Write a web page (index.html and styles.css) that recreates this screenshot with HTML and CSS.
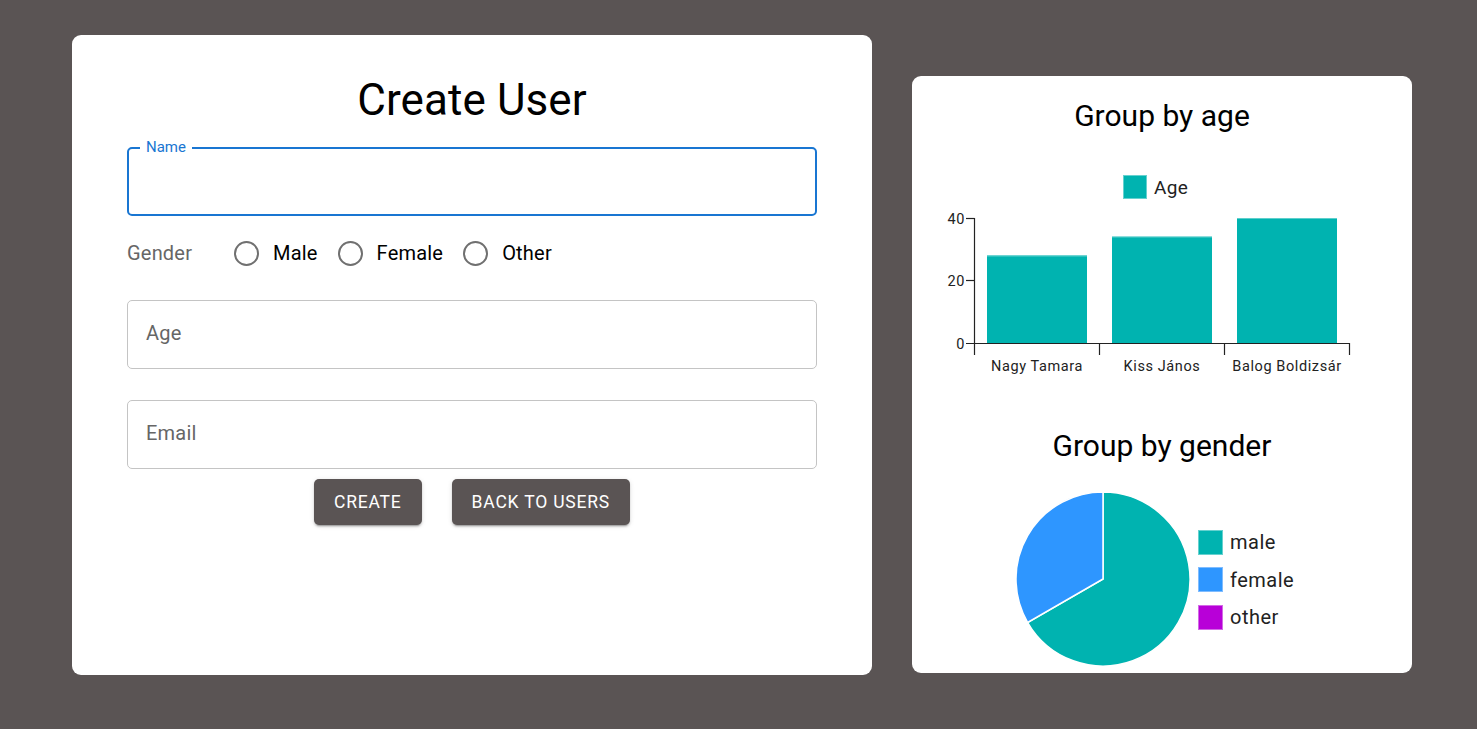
FILE: index.html
```html
<!DOCTYPE html>
<html lang="en">
<head>
<meta charset="utf-8">
<title>Create User</title>
<link rel="stylesheet" href="styles.css">
</head>
<body>
<div class="page">
  <section class="card form-card">
    <h1 class="title">Create User</h1>
    <div class="field field-focused">
      <span class="field-label">Name</span>
    </div>
    <div class="gender-row">
      <span class="gender-label">Gender</span>
      <div class="radio-group">
        <label class="radio-option"><span class="radio-circle"></span><span class="radio-text">Male</span></label>
        <label class="radio-option"><span class="radio-circle"></span><span class="radio-text">Female</span></label>
        <label class="radio-option"><span class="radio-circle"></span><span class="radio-text">Other</span></label>
      </div>
    </div>
    <div class="field field-age">
      <span class="field-placeholder">Age</span>
    </div>
    <div class="field field-email">
      <span class="field-placeholder">Email</span>
    </div>
    <div class="actions">
      <button class="btn">CREATE</button>
      <button class="btn">BACK TO USERS</button>
    </div>
  </section>

  <section class="card stats-card">
    <h2 class="chart-title">Group by age</h2>
    <svg class="bar-chart" width="500" height="220" viewBox="0 0 500 220">
      <rect x="211.5" y="10.5" width="23" height="23" fill="#00b3b0" stroke="#66d1cf" stroke-width="1"/>
      <text class="legend-text" x="242" y="29">Age</text>
      <g class="bars" fill="#00b3b0">
        <rect x="75" y="90.5" width="100" height="87.5"/>
        <rect x="200" y="71.75" width="100" height="106.25"/>
        <rect x="325" y="53" width="100" height="125"/>
      </g>
      <g stroke="#5ccfcc" stroke-width="1">
        <line x1="75" y1="91" x2="175" y2="91"/>
        <line x1="200" y1="72" x2="300" y2="72"/>
        <line x1="325" y1="53.5" x2="425" y2="53.5"/>
      </g>
      <g stroke="#222" stroke-width="1.2" fill="none">
        <line x1="62.5" y1="53" x2="62.5" y2="190"/>
        <line x1="54" y1="53.5" x2="62.5" y2="53.5"/>
        <line x1="54" y1="115.5" x2="62.5" y2="115.5"/>
        <line x1="54" y1="178.5" x2="437.5" y2="178.5"/>
        <line x1="187.5" y1="178" x2="187.5" y2="190"/>
        <line x1="312.5" y1="178" x2="312.5" y2="190"/>
        <line x1="437.5" y1="178" x2="437.5" y2="190"/>
      </g>
      <g class="axis-text" text-anchor="end">
        <text x="53" y="58.5">40</text>
        <text x="53" y="120.5">20</text>
        <text x="53" y="183.5">0</text>
      </g>
      <g class="axis-text" text-anchor="middle">
        <text x="125" y="206">Nagy Tamara</text>
        <text x="250" y="206">Kiss János</text>
        <text x="375" y="206">Balog Boldizsár</text>
      </g>
    </svg>
    <h2 class="chart-title chart-title-gender">Group by gender</h2>
    <svg class="pie-chart" width="500" height="185" viewBox="0 0 500 185">
      <path d="M191 91 L191 4 A87 87 0 1 1 115.66 134.5 Z" fill="#00b3b0" stroke="#ffffff" stroke-width="1.5"/>
      <path d="M191 91 L115.66 134.5 A87 87 0 0 1 191 4 Z" fill="#2e96ff" stroke="#ffffff" stroke-width="1.5"/>
      <rect x="286.5" y="42.5" width="24" height="24" fill="#00b3b0" stroke="#66d1cf"/>
      <rect x="286.5" y="79.5" width="24" height="24" fill="#2e96ff" stroke="#7fbcff"/>
      <rect x="286.5" y="117.5" width="24" height="24" fill="#b800d8" stroke="#d36ae6"/>
      <text class="legend-text pie-legend" x="318" y="61">male</text>
      <text class="legend-text pie-legend" x="318" y="99">female</text>
      <text class="legend-text pie-legend" x="318" y="136">other</text>
    </svg>
  </section>
</div>
</body>
</html>
```

FILE: styles.css
```css
* {
  box-sizing: border-box;
}

html, body {
  margin: 0;
  padding: 0;
}

body {
  background: #5a5454;
  font-family: Roboto, "Noto Sans", "Liberation Sans", sans-serif;
  width: 1477px;
  height: 729px;
  overflow: hidden;
}

.page {
  display: flex;
  align-items: flex-start;
  gap: 40px;
  padding: 35px 0 0 72px;
}

.card {
  background: #ffffff;
  border-radius: 9px;
}

.form-card {
  width: 800px;
  height: 640px;
  padding: 0 55px;
  display: flex;
  flex-direction: column;
}

.title {
  margin: 39px 0 0;
  font-size: 44px;
  line-height: 52px;
  font-weight: 400;
  text-align: center;
  color: #000;
  letter-spacing: 0.1px;
}

.field {
  position: relative;
  height: 69px;
  border: 1px solid #c4c4c4;
  border-radius: 5px;
  display: flex;
  align-items: center;
  padding-left: 18px;
  padding-bottom: 3px;
}

.field-focused {
  margin-top: 21px;
  border: 2px solid #1976d2;
}

.field-label {
  position: absolute;
  left: 11px;
  top: -11px;
  padding: 0 6px;
  background: #fff;
  color: #1976d2;
  font-size: 15px;
  line-height: 18px;
}

.field-placeholder {
  font-size: 20px;
  color: #666666;
  letter-spacing: 0.2px;
}

.gender-row {
  height: 52px;
  margin: 11px 0 21px;
  display: flex;
  align-items: center;
}

.gender-label {
  font-size: 20px;
  color: #666666;
  width: 107px;
  letter-spacing: 0.2px;
}

.radio-group {
  display: flex;
  align-items: center;
}

.radio-option {
  display: flex;
  align-items: center;
  margin-right: 20px;
}

.radio-circle {
  width: 25px;
  height: 25px;
  border: 2.5px solid #707070;
  border-radius: 50%;
  margin-right: 14px;
}

.radio-text {
  font-size: 20px;
  color: #000;
  letter-spacing: 0.2px;
}

.field-email {
  margin-top: 31px;
}

.actions {
  margin-top: 10px;
  display: flex;
  justify-content: center;
  gap: 30px;
}

.btn {
  height: 46px;
  padding: 0 20px;
  border: none;
  border-radius: 5px;
  background: #5a5454;
  color: #fff;
  font-family: Roboto, "Liberation Sans", sans-serif;
  font-size: 17.5px;
  font-weight: 400;
  letter-spacing: 0.8px;
  box-shadow: 0 3px 1px -2px rgba(0,0,0,0.2), 0 2px 2px 0 rgba(0,0,0,0.14), 0 1px 5px 0 rgba(0,0,0,0.12);
}

.stats-card {
  width: 500px;
  height: 597px;
  margin-top: 41px;
  display: flex;
  flex-direction: column;
}

.chart-title {
  margin: 22px 0 0;
  font-size: 30px;
  line-height: 36px;
  font-weight: 400;
  text-align: center;
  color: #000;
}

.chart-title-gender {
  margin-top: 43px;
}

.bar-chart {
  display: block;
  margin-top: 31px;
}

.pie-chart {
  display: block;
  margin-top: 24px;
}

.legend-text {
  font-family: Roboto, "Liberation Sans", sans-serif;
  font-size: 19px;
  fill: #222;
  letter-spacing: 0.4px;
}

.pie-legend {
  font-size: 20px;
  letter-spacing: 0.5px;
}

.axis-text {
  font-family: Roboto, "Liberation Sans", sans-serif;
  font-size: 14.5px;
  fill: #222;
  letter-spacing: 0.6px;
}
```
